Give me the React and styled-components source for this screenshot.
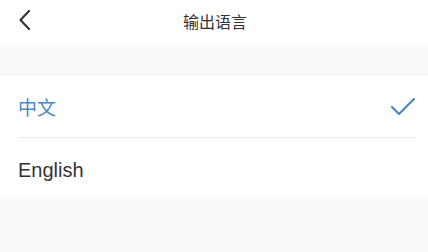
import React from "react";
import styled, { createGlobalStyle } from "styled-components";

const Global = createGlobalStyle`
  html, body { margin: 0; padding: 0; background: #f8f9fb; }
  body { font-family: "Liberation Sans", "Noto Sans CJK SC", sans-serif; }
`;

const Page = styled.div`
  width: 428px;
  min-height: 252px;
  background: #f8f9fb;
`;

const Header = styled.div`
  height: 47px;
  background: #ffffff;
  position: relative;
  display: flex;
  align-items: center;
  justify-content: center;
`;

const BackButton = styled.button`
  position: absolute;
  left: 14px;
  top: 6px;
  width: 22px;
  height: 28px;
  padding: 0;
  border: 0;
  background: transparent;
  display: flex;
  align-items: center;
  justify-content: center;
`;

const Title = styled.h1`
  margin: 0 0 6px 2px;
  font-family: "Noto Sans CJK SC", sans-serif;
  font-size: 16px;
  font-weight: 400;
  color: #333333;
  line-height: 1;
`;

const Spacer = styled.div`
  height: 29px;
`;

const List = styled.ul`
  list-style: none;
  margin: 0;
  padding: 0 11px 0 18px;
  background: #ffffff;
`;

const Row = styled.li`
  height: 61px;
  display: flex;
  align-items: center;
  justify-content: space-between;
  border-bottom: ${(p) => (p.$last ? "none" : "1px solid #ececee")};
`;

const Label = styled.span`
  font-family: ${(p) =>
    p.$cjk ? '"Noto Sans CJK SC", sans-serif' : '"Liberation Sans", sans-serif'};
  font-size: ${(p) => (p.$cjk ? "19px" : "20px")};
  color: ${(p) => (p.$active ? "#4c88c6" : "#333333")};
  margin-top: ${(p) => (p.$cjk ? "0" : "4px")};
`;

const Check = () => (
  <svg width="28" height="24" viewBox="0 0 28 24">
    <polyline
      points="3,12 10,19 25,4"
      fill="none"
      stroke="#4c88c6"
      strokeWidth="2.2"
      strokeLinecap="round"
      strokeLinejoin="round"
    />
  </svg>
);

export default function App() {
  return (
    <>
      <Global />
      <Page>
        <Header>
          <BackButton aria-label="back">
            <svg width="14" height="22" viewBox="0 0 14 22">
              <polyline
                points="11,2 2.5,11 11,20"
                fill="none"
                stroke="#333"
                strokeWidth="2.2"
                strokeLinecap="round"
                strokeLinejoin="round"
              />
            </svg>
          </BackButton>
          <Title>输出语言</Title>
        </Header>
        <Spacer />
        <List>
          <Row>
            <Label $active $cjk>中文</Label>
            <Check />
          </Row>
          <Row $last>
            <Label>English</Label>
          </Row>
        </List>
      </Page>
    </>
  );
}
